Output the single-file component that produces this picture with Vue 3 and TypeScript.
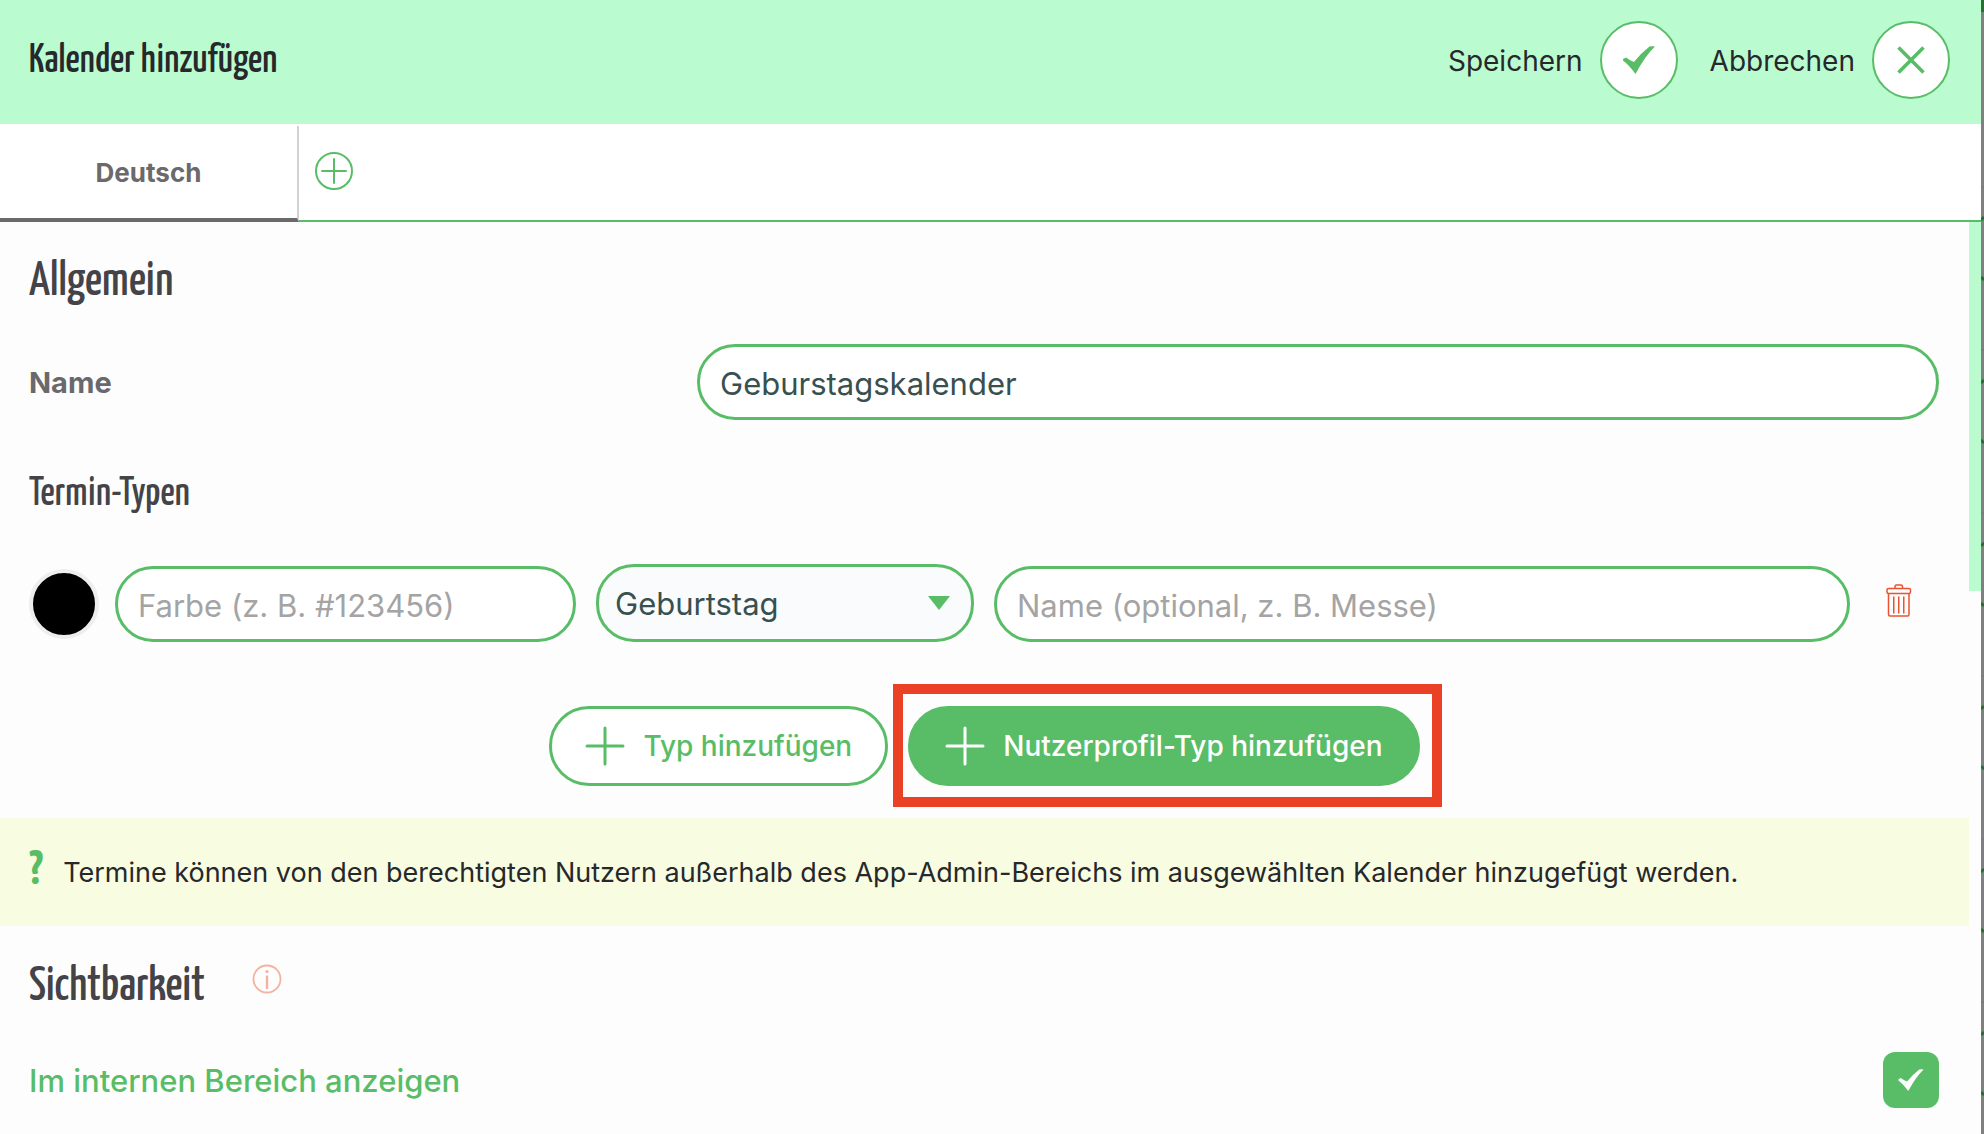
<script setup lang="ts">
import { ref } from 'vue'

const name = ref('Geburstagskalender')
const color = ref('')
const kind = ref('Geburtstag')
const label = ref('')
const internal = ref(true)
const rows = [0, 1, 2, 3, 4, 5]
</script>

<template>
  <div class="page">
    <main class="panel">
      <header class="top">
        <h1>Kalender hinzufügen</h1>
        <div class="actions">
          <label class="action"><span>Speichern</span>
            <button type="button" class="round" aria-label="Speichern">
              <svg width="32" height="28" viewBox="0 0 32 28"><path d="M0 13 L3 11.500 Q7 14.500 11 16 Q18 7 26.500 .5 Q29 0 32 .5 Q22 10 12.500 28 Q6 19 0 14.500Z" fill="#58bd66" /></svg>
            </button>
          </label>
          <label class="action"><span>Abbrechen</span>
            <button type="button" class="round" aria-label="Abbrechen">
              <svg width="30" height="30" viewBox="0 0 30 30"><path d="M2.500 2.500 27.500 27.500M27.500 2.500 2.500 27.500" stroke="#58bd66" stroke-width="3.600" /></svg>
            </button>
          </label>
        </div>
      </header>

      <nav class="tabs">
        <button type="button" class="tab">Deutsch</button>
        <button type="button" class="add" aria-label="Sprache hinzufügen">
          <svg width="38" height="38" viewBox="0 0 38 38" fill="none" stroke="#58bd66" stroke-width="2" stroke-linecap="round"><circle cx="19" cy="19" r="18" /><path d="M19 7v24M7 19h24" /></svg>
        </button>
      </nav>

      <div class="scroll">
        <form class="form" @submit.prevent>
          <h2>Allgemein</h2>
          <div class="field">
            <label for="name">Name</label>
            <input id="name" v-model="name" class="pill" type="text" />
          </div>
          <h3>Termin-Typen</h3>
          <div class="type-row">
            <button type="button" class="swatch" aria-label="Farbe wählen"></button>
            <input v-model="color" class="pill color" type="text" aria-label="Farbe" placeholder="Farbe (z. B. #123456)" />
            <div class="select-box">
              <select v-model="kind" class="pill" aria-label="Typ">
                <option>Geburtstag</option>
              </select>
              <svg class="arrow" width="22" height="14" viewBox="0 0 22 14"><path d="M0 0h22L11 14z" fill="#58bd66" /></svg>
            </div>
            <input v-model="label" class="pill label" type="text" aria-label="Name des Typs" placeholder="Name (optional, z. B. Messe)" />
            <button type="button" class="trash" aria-label="Löschen">
              <svg width="26" height="34" viewBox="0 0 26 34" fill="none" stroke="#e9532f" stroke-width="1.500"><rect x="1" y="4.500" width="23.500" height="5" rx="1.500" /><path d="M9 4.500V2.500Q9 1 10.500 1h4.500Q16.500 1 16.500 2.500V4.500M2.500 9.500V30.500Q2.500 32 4 32h17.500Q23 32 23 30.500V9.500M7.750 12.500v17M12.750 12.500v17M17.750 12.500v17" /></svg>
            </button>
          </div>
          <div class="buttons">
            <button type="button" class="btn">
              <svg class="plus" width="40" height="40" viewBox="0 0 40 40"><path d="M20 2v36M2 20h36" /></svg>Typ hinzufügen
            </button>
            <div class="marked">
              <button type="button" class="btn primary">
                <svg class="plus" width="40" height="40" viewBox="0 0 40 40"><path d="M20 2v36M2 20h36" /></svg>Nutzerprofil-Typ hinzufügen
              </button>
            </div>
          </div>
          <p class="notice"><b>?</b><span>Termine können von den berechtigten Nutzern außerhalb des App-Admin-Bereichs im ausgewählten Kalender hinzugefügt werden.</span></p>
          <div class="section">
            <h2>Sichtbarkeit</h2>
            <svg class="info" width="30" height="30" viewBox="0 0 30 30" fill="none" stroke="#f3b3a1" stroke-width="1.800"><circle cx="15" cy="15" r="13.500" /><path d="M15 11.500v13.500" stroke-width="2.400" /><circle cx="15" cy="7.500" r="1.600" fill="#f3b3a1" stroke="none" /></svg>
          </div>
          <div class="check-row">
            <label for="internal">Im internen Bereich anzeigen</label>
            <span class="check">
              <input id="internal" v-model="internal" type="checkbox" />
              <svg v-if="internal" width="26" height="22" viewBox="0 0 32 28"><path d="M0 13 L3 11.500 Q7 14.500 11 16 Q18 7 26.500 .5 Q29 0 32 .5 Q22 10 12.500 28 Q6 19 0 14.500Z" fill="#fff" /></svg>
            </span>
          </div>
        </form>
        <div class="track"><div class="thumb"></div></div>
      </div>
    </main>
    <aside class="backdrop">
      <i class="bar"></i>
      <svg v-for="r in rows" :key="r" class="mark" width="3" height="163" viewBox="0 0 3 163"><path d="M0 34 3 31M0 91 3 94" stroke="#236d31" stroke-width="3" /><path d="M0 1h3" stroke="#777" /></svg>
    </aside>
  </div>
</template>

<style>
html, body { height: 100%; }
body { margin: 0; background: #fdfdfd; overflow: hidden; }
#app { height: 100%; }
</style>

<style scoped>
* { box-sizing: border-box; }
.page { display: flex; height: 100%; overflow: hidden; font-family: Inter, "Liberation Sans", sans-serif; color: #26282b; }
button, input, select { font: inherit; margin: 0; padding: 0; border: 0; background: none; color: inherit; }
svg { display: block; flex: none; }
.panel { flex: 1; min-width: 0; display: flex; flex-direction: column; }
h1, h2, h3 { margin: 0; font-family: "Yanone Kaffeesatz", "Liberation Sans Narrow", sans-serif; font-weight: 500; color: #434348; }
h1 { padding-top: 4px; font-size: 40px; line-height: 44px; color: #26282b; }
h2 { font-size: 48px; line-height: 56px; }
h3 { margin-top: 53px; font-size: 40px; line-height: 44px; }
.top { flex: none; height: 124px; padding: 0 31px 4px 29px; display: flex; align-items: center; justify-content: space-between; background: #bbfbd0; }
.actions { display: flex; gap: 32px; }
.action { display: flex; align-items: center; gap: 17px; font-size: 28px; }
.action span { padding-top: 2px; }
.round { width: 78px; height: 78px; border: 2px solid #58bd66; border-radius: 50%; background: #fff; display: flex; align-items: center; justify-content: center; }
.tabs { flex: none; height: 98px; display: flex; align-items: stretch; background: linear-gradient(#58bd66, #58bd66) bottom / 100% 2px no-repeat #fff; }
.tab { width: 299px; margin-top: 2px; border-right: 2px solid #d2d2d2; border-bottom: 4px solid #6b6969; font-size: 26px; font-weight: 700; color: #6b6969; }
.add { padding: 0 16px 4px; }
.scroll { flex: 1; min-height: 0; display: flex; background: #fdfdfd; }
.form { flex: 1; min-width: 0; padding-top: 33px; }
.form > h2, .form > h3 { padding-left: 29px; }
.field { display: flex; align-items: center; margin: 33px 30px 0 29px; }
.field label { width: 668px; font-size: 29px; font-weight: 700; color: #69696d; }
.pill { height: 76px; min-width: 0; padding: 2px 20px 0; border: 3px solid #58bd66; border-radius: 38px; background: #fff; color: #38504f; font-size: 31px; outline: 0; }
.pill::placeholder { color: #a4a4a4; opacity: 1; }
.field .pill { flex: 1; }
.type-row { display: flex; align-items: flex-end; margin: 47px 57px 0 29px; }
.swatch { flex: none; width: 70px; height: 70px; margin-bottom: 3px; border: 4px solid #eee; border-radius: 50%; background: #000; }
.color { width: 461px; margin: 0 20px 0 16px; }
.select-box { position: relative; width: 378px; }
.select-box .pill { display: block; width: 100%; height: 78px; padding: 0 16px; appearance: none; background: #f9fbfd; }
.arrow { position: absolute; right: 24px; top: 32px; pointer-events: none; }
.label { flex: 1; margin: 0 36px 0 20px; }
.trash { margin-bottom: 24px; }
.buttons { display: flex; justify-content: center; gap: 20px; margin-top: 64px; }
.btn { height: 80px; padding: 0 33px; border: 3px solid #58bd66; border-radius: 40px; background: #fff; color: #58bd66; font-size: 28px; font-weight: 500; display: flex; align-items: center; gap: 18px; }
.primary { padding: 0 34px; background: #58bd66; color: #fff; }
.plus { fill: none; stroke: currentColor; stroke-width: 3px; stroke-linecap: round; }
.marked { position: relative; }
.marked::after { content: ""; position: absolute; inset: -22px -22px -21px -15px; border: 10px solid #ea4025; pointer-events: none; }
.notice { margin: 32px 0 0; min-height: 108px; padding: 0 29px; display: flex; align-items: center; gap: 20px; background: #f8fce0; font-size: 27px; }
.notice b { font-family: "Yanone Kaffeesatz", "Liberation Sans Narrow", sans-serif; font-size: 48px; color: #58bd66; }
.section { display: flex; align-items: center; gap: 47px; padding: 34px 29px 0; }
.info { margin-bottom: 18px; }
.check-row { display: flex; align-items: center; justify-content: space-between; margin: 36px 30px 0 29px; font-size: 31px; font-weight: 500; color: #58bd66; }
.check { position: relative; width: 56px; height: 56px; }
.check input { display: block; width: 56px; height: 56px; appearance: none; border-radius: 12px; background: #58bd66; }
.check svg { position: absolute; left: 15px; top: 17px; pointer-events: none; }
.track { flex: none; width: 12px; }
.thumb { height: 369px; background: #bbfbd0; }
.backdrop { flex: none; width: 3px; height: 100%; overflow: hidden; background: #808080; }
.bar { display: block; height: 12px; margin-bottom: 174px; background: #29702f; }
</style>
